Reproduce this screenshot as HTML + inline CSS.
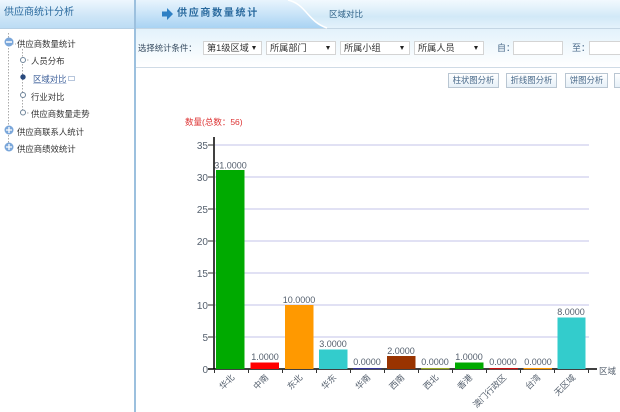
<!DOCTYPE html>
<html><head><meta charset="utf-8"><style>
*{margin:0;padding:0;box-sizing:border-box}
html,body{width:620px;height:412px;overflow:hidden;background:#fff;font-family:"Liberation Sans","Noto Sans CJK SC",sans-serif;font-size:8.4px;color:#333}
.a{position:absolute;white-space:nowrap;line-height:12px}
.sel{position:absolute;top:41px;height:14px;background:#fff;border:1px solid #d4d4d4;font-size:9.2px;line-height:13px;padding-left:3px;color:#333;white-space:nowrap}
.sel:after{content:"";position:absolute;right:5px;top:4px;border-left:2.5px solid transparent;border-right:2.5px solid transparent;border-top:4px solid #222}
.inp{position:absolute;top:41px;height:14px;background:#fff;border:1px solid #d4d4d4}
.btn{position:absolute;top:73px;height:15px;background:linear-gradient(#fff,#e6f0f8);border:1px solid #b9c6d2;color:#4a6a8a;font-size:8.4px;line-height:13px;text-align:center;white-space:nowrap;overflow:hidden}
</style></head><body>
<div class="a" style="left:0;top:0;width:134px;height:29px;background:linear-gradient(#eef7fe,#cfe6f7 55%,#bcdcf4 100%);border-bottom:1px solid #b5cfe4"></div>
<div class="a" style="left:4px;top:6px;font-size:10px;line-height:14px;color:#2a6a9e">供应商统计分析</div>
<div class="a" style="left:134px;top:0;width:2px;height:412px;background:#9cc0de"></div>
<div class="a" style="left:136px;top:0;width:484px;height:29px;background:linear-gradient(#f2f9fe,#d2e9f7 60%,#e4f2fb 100%);border-bottom:1px solid #c4d6e4"></div>
<svg class="a" style="left:136px;top:0" width="484" height="29"><path d="M0 0H152C170 4 172 22 191 28H0Z" fill="url(#g)"/><defs><linearGradient id="g" x1="0" y1="0" x2="0" y2="1"><stop offset="0" stop-color="#e8f4fd"/><stop offset="1" stop-color="#a9d3f3"/></linearGradient></defs><path d="M152 0C170 4 172 22 191 28" fill="none" stroke="#fff" stroke-width="1.5"/><path d="M26 11.500h5V8l6 6-6 6v-3.500h-5Z" fill="#2f80c4"/></svg>
<div class="a" style="left:177px;top:7px;font-size:10px;line-height:14px;letter-spacing:1.700px;color:#2a6a9e;font-weight:bold">供应商数量统计</div>
<div class="a" style="left:329px;top:8px;font-size:8.500px;color:#2f6288">区域对比</div>
<div class="a" style="left:136px;top:29px;width:484px;height:39px;background:linear-gradient(#e3f2fb,#fff);border-bottom:1px solid #cfdbe6"></div>
<div class="a" style="left:138px;top:42px;color:#34495e">选择统计条件：</div>
<div class="sel" style="left:203px;width:59px">第1级区域</div>
<div class="sel" style="left:266px;width:70px">所属部门</div>
<div class="sel" style="left:340px;width:70px">所属小组</div>
<div class="sel" style="left:414px;width:70px">所属人员</div>
<div class="a" style="left:497px;top:42px;color:#4a6a8a;font-size:9px">自：</div>
<div class="inp" style="left:513px;width:50px"></div>
<div class="a" style="left:572px;top:42px;color:#4a6a8a;font-size:9px">至：</div>
<div class="inp" style="left:589px;width:40px"></div>
<div class="btn" style="left:448px;width:51px">柱状图分析</div>
<div class="btn" style="left:506px;width:51px">折线图分析</div>
<div class="btn" style="left:565px;width:43px">饼图分析</div>
<div class="btn" style="left:614px;width:20px"></div>

<svg class="a" style="left:0;top:29px" width="134" height="135">
<path d="M8.500 4V120M22.500 20V84M9 15H16M24 31H30M24 84H30" stroke="#aaa" stroke-dasharray="1.500 1.500" fill="none"/>
<circle cx="9" cy="13" r="4.500" fill="#7ba7da"/><path d="M6 13h6" stroke="#fff" stroke-width="1.500"/>
<circle cx="23" cy="31" r="2.500" fill="#fff" stroke="#6e8499"/>
<circle cx="23" cy="48" r="2.700" fill="#2a4a7e"/>
<circle cx="23" cy="66" r="2.500" fill="#fff" stroke="#6e8499"/>
<circle cx="23" cy="83.500" r="2.500" fill="#fff" stroke="#6e8499"/>
<circle cx="9" cy="101" r="4.500" fill="#7ba7da"/><path d="M6 101h6M9 98v6" stroke="#fff" stroke-width="1.300"/>
<circle cx="9" cy="118" r="4.500" fill="#7ba7da"/><path d="M6 118h6M9 115v6" stroke="#fff" stroke-width="1.300"/>
</svg>
<div class="a" style="left:17px;top:38px">供应商数量统计</div>
<div class="a" style="left:31px;top:55px">人员分布</div>
<div class="a" style="left:33px;top:73px;color:#3d5f99;text-decoration:underline;text-decoration-color:#c5d0e4">区域对比</div>
<div class="a" style="left:68px;top:76px;width:7px;height:5px;border:1px solid #b7c6dc"></div>
<div class="a" style="left:31px;top:91px">行业对比</div>
<div class="a" style="left:31px;top:108px">供应商数量走势</div>
<div class="a" style="left:17px;top:126px">供应商联系人统计</div>
<div class="a" style="left:17px;top:143px">供应商绩效统计</div>

<svg class="a" style="left:0;top:0" width="620" height="412" font-family="Liberation Sans,Noto Sans CJK SC,sans-serif" font-size="8.500">
<text x="185" y="125" fill="#dd3333" font-size="8.500">数量(总数：56)</text>
<g stroke="#c3c3ea"><path d="M215 145H589M215 177H589M215 209H589M215 241H589M215 273H589M215 305H589M215 337H589"/></g>
<path d="M214 137V369.500" stroke="#000" stroke-width="1.500"/>
<path d="M208 369H597" stroke="#000" stroke-width="1.500"/>
<path d="M208 145h6M208 177h6M208 209h6M208 241h6M208 273h6M208 305h6M208 337h6" stroke="#333"/>
<path d="M214.500 369v4M248.500 369v4M282.500 369v4M316.500 369v4M350.500 369v4M384.500 369v4M418.500 369v4M452.500 369v4M486.500 369v4M520.500 369v4M554.500 369v4M588.500 369v4" stroke="#333"/>
<g fill="#55606e" text-anchor="end" font-size="10"><text x="208" y="149">35</text><text x="208" y="181">30</text><text x="208" y="213">25</text><text x="208" y="245">20</text><text x="208" y="277">15</text><text x="208" y="309">10</text><text x="208" y="341">5</text><text x="208" y="373">0</text></g>
<rect x="216" y="170" width="28.500" height="199" fill="#00aa00"/>
<rect x="250.500" y="362.500" width="28.500" height="6.500" fill="#ff0000"/>
<rect x="285" y="305" width="28.500" height="64" fill="#ff9900"/>
<rect x="319" y="349.500" width="28.500" height="19.500" fill="#33cccc"/>
<rect x="353" y="368" width="28.500" height="1.200" fill="#333399"/>
<rect x="387" y="356" width="28.500" height="13" fill="#993300"/>
<rect x="421" y="368" width="28.500" height="1.200" fill="#99aa22"/>
<rect x="455" y="362.500" width="28.500" height="6.500" fill="#00aa00"/>
<rect x="489.500" y="368" width="28.500" height="1.200" fill="#cc1111"/>
<rect x="523.500" y="368" width="28.500" height="1.200" fill="#ff9900"/>
<rect x="557.500" y="317.500" width="28" height="51.500" fill="#33cccc"/>
<g fill="#55606e" text-anchor="middle" font-size="9">
<text x="230.500" y="168.500">31.0000</text><text x="265" y="360">1.0000</text><text x="299" y="303">10.0000</text><text x="333" y="347">3.0000</text><text x="367" y="365">0.0000</text><text x="401" y="354">2.0000</text><text x="435" y="365">0.0000</text><text x="469" y="360">1.0000</text><text x="503" y="365">0.0000</text><text x="538" y="365">0.0000</text><text x="571" y="315">8.0000</text>
</g>
<g fill="#55606e" text-anchor="end" font-size="8.600">
<text transform="translate(235 378) rotate(-45)">华北</text>
<text transform="translate(269 378) rotate(-45)">中南</text>
<text transform="translate(303 378) rotate(-45)">东北</text>
<text transform="translate(337 378) rotate(-45)">华东</text>
<text transform="translate(371 378) rotate(-45)">华南</text>
<text transform="translate(405 378) rotate(-45)">西南</text>
<text transform="translate(439 378) rotate(-45)">西北</text>
<text transform="translate(473 378) rotate(-45)">香港</text>
<text transform="translate(507 378) rotate(-45)">澳门行政区</text>
<text transform="translate(541 378) rotate(-45)">台湾</text>
<text transform="translate(576 378) rotate(-45)">无区域</text>
</g>
<text x="599" y="374" fill="#55606e">区域</text>
</svg>
</body></html>
